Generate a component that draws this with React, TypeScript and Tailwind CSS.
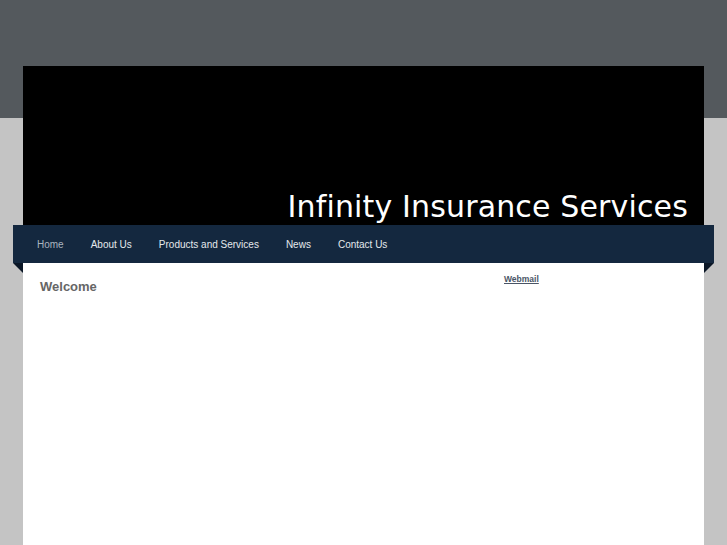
import React from "react";

export default function App() {
  const nav = ["Home", "About Us", "Products and Services", "News", "Contact Us"];
  return (
    <div className="relative w-[727px] h-[545px] overflow-hidden bg-[#c4c4c4]" style={{ fontFamily: "'Liberation Sans', Arial, sans-serif" }}>
      <div className="absolute left-0 top-0 w-full h-[118px] bg-[#54595d]" />
      <div className="relative pt-[66px]">
        <div className="mx-[23px] h-[159px] bg-black flex items-end justify-end pr-[16px] pb-0">
          <span className="text-white text-[30px] leading-[36px] tracking-[0.15px]" style={{ fontFamily: "'DejaVu Sans', Verdana, sans-serif" }}>
            Infinity Insurance Services
          </span>
        </div>
        <div className="relative mx-[13px] h-[38px] bg-[#14283f] flex items-center pl-[24px] gap-[27px] text-[10px]">
          {nav.map((n, i) => (
            <span key={n} className={i === 0 ? "text-[#aab4bf]" : "text-[#e4e8ec]"}>
              {n}
            </span>
          ))}
          <div className="absolute left-0 top-full w-0 h-0 border-t-[10px] border-t-[#0a1626] border-l-[10px] border-l-transparent" />
          <div className="absolute right-0 top-full w-0 h-0 border-t-[10px] border-t-[#0a1626] border-r-[10px] border-r-transparent" />
        </div>
        <div className="mx-[23px] h-[300px] bg-white flex">
          <div className="w-[460px] pl-[17px] pt-[14px]">
            <h1 className="text-[13px] font-bold text-[#666666]">Welcome</h1>
          </div>
          <div className="pl-[21px] pt-[10px] text-[8.5px] leading-[12px]">
            <a className="font-bold text-[#4a5566] underline">Webmail</a>
          </div>
        </div>
      </div>
    </div>
  );
}
